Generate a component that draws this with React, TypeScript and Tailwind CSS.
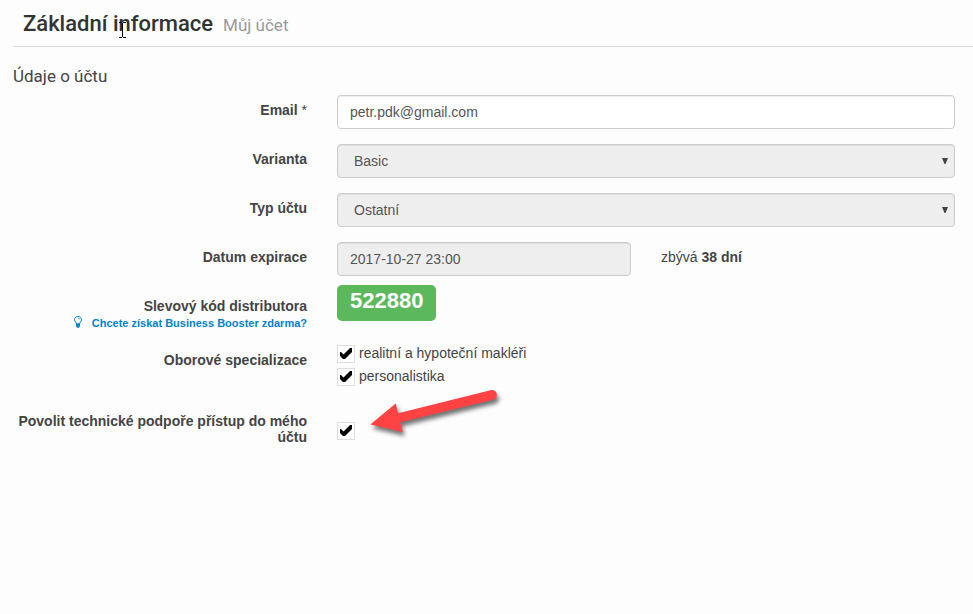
import type { ReactNode } from 'react';

const fieldBase =
  'block h-[34px] w-full rounded border border-[#ccc] text-[14px] text-[#555] shadow-[inset_0_1px_1px_rgba(0,0,0,0.075)] outline-none';

function Row({ htmlFor, label, hint, children }: { htmlFor?: string; label: ReactNode; hint?: ReactNode; children: ReactNode }) {
  return (
    <div className="grid grid-cols-12 gap-x-[30px]">
      <div className="col-span-4 pt-[7px] text-right text-[14px] leading-4 font-bold">
        <label htmlFor={htmlFor}>{label}</label>
        {hint}
      </div>
      {children}
    </div>
  );
}

function Tick({ id }: { id: string }) {
  return (
    <span className="grid size-[18px] shrink-0">
      <input
        id={id}
        type="checkbox"
        defaultChecked
        className="peer col-start-1 row-start-1 size-[18px] appearance-none border border-[#ddd] bg-white"
      />
      <svg viewBox="0 0 18 18" className="pointer-events-none invisible col-start-1 row-start-1 size-[18px] peer-checked:visible" aria-hidden="true">
        <path d="M3 7H4L6.5 9.500L13 3H15V7L8 14H6L3 11Z" fill="#000" />
      </svg>
    </span>
  );
}

function SelectField({ id, value }: { id: string; value: string }) {
  return (
    <div className="relative col-span-8">
      <select id={id} disabled className={`${fieldBase} appearance-none bg-[#eee] px-4 opacity-100`}>
        <option>{value}</option>
      </select>
      <svg viewBox="0 0 6 6" className="pointer-events-none absolute top-[14px] right-[7px] size-[6px]" aria-hidden="true">
        <path d="M0 0H6L3.5 6H2.5Z" fill="#444" />
      </svg>
    </div>
  );
}

export default function App() {
  return (
    <main className="min-h-screen bg-[#fdfdfd] pl-[13px] font-['Liberation_Sans',Arial,sans-serif] text-[#444]">
      <header className="relative flex h-[47px] items-baseline gap-[10px] border-b border-[#ddd] pt-2 pl-[10px] font-[Roboto,sans-serif]">
        <h1 className="text-[22px] leading-8 font-medium text-[#333]">Základní informace</h1>
        <small className="text-[17px] text-[#999]">Můj účet</small>
        <svg viewBox="0 0 7 16" className="absolute top-[22px] left-[106px] h-4 w-[7px]" fill="none" stroke="#000" aria-hidden="true">
          <path d="M0 .5H3M4 .5H7M3.5 1V15M0 15.5H3M4 15.5H7" />
        </svg>
      </header>

      <form className="flex flex-col gap-[15px] pr-[18px]">
        <h2 className="mt-[17px] -mb-2 font-[Roboto,sans-serif] text-[17px] leading-6 text-[#444]">Údaje o účtu</h2>

        <Row htmlFor="email" label={<>Email <span className="font-normal">*</span></>}>
          <div className="col-span-8">
            <input id="email" type="email" defaultValue="petr.pdk@gmail.com" className={`${fieldBase} bg-white px-3`} />
          </div>
        </Row>
        <Row htmlFor="variant" label="Varianta">
          <SelectField id="variant" value="Basic" />
        </Row>
        <Row htmlFor="type" label="Typ účtu">
          <SelectField id="type" value="Ostatní" />
        </Row>
        <Row htmlFor="expiry" label="Datum expirace">
          <div className="col-span-4">
            <input id="expiry" disabled defaultValue="2017-10-27 23:00" className={`${fieldBase} bg-[#eee] px-3`} />
          </div>
          <p className="col-span-4 pt-[7px] text-[14px] leading-4">
            zbývá <strong>38 dní</strong>
          </p>
        </Row>

        <Row
          label="Slevový kód distributora"
          hint={
            <a href="#booster" className="flex items-center justify-end gap-[9px] text-[11px] leading-[18px] font-bold text-[#0082cc]">
              <svg viewBox="0 0 10 14" className="-mt-[2px] h-[14px] w-[10px]" fill="none" stroke="#0082cc" aria-hidden="true">
                <path d="M3.500 9C3.500 7.500 1.500 6.600 1.500 4.700C1.500 2.800 3 1.500 5 1.500S8.500 2.800 8.500 4.700C8.500 6.600 6.500 7.500 6.500 9Z" />
                <path d="M5 3C6 3 6.800 3.600 6.800 4.500" strokeWidth=".7" />
                <path d="M3 8.500H7V11L6 12.700H4L3 11Z" fill="#0082cc" stroke="none" />
              </svg>
              Chcete získat Business Booster zdarma?
            </a>
          }
        >
          <div className="col-span-8 -mt-[6px] -mb-4">
            <strong className="inline-block h-9 rounded-[5px] bg-[#5cb85c] px-[13px] text-[22px] leading-8 text-white">522880</strong>
          </div>
        </Row>

        <div className="-mt-[2px]">
          <Row label="Oborové specializace">
            <div className="col-span-8 flex flex-col gap-[5px] text-[14px] leading-4">
              <label htmlFor="realty" className="flex gap-1">
                <Tick id="realty" />
                realitní a hypoteční makléři
              </label>
              <label htmlFor="hr" className="flex gap-1">
                <Tick id="hr" />
                personalistika
              </label>
            </div>
          </Row>
        </div>

        <div className="mt-[5px]">
          <Row htmlFor="support" label="Povolit technické podpoře přístup do mého účtu">
            <div className="relative col-span-8 pt-4">
              <Tick id="support" />
              <svg viewBox="0 0 150 65" className="pointer-events-none absolute -top-[26px] left-[23px] h-[65px] w-[150px] overflow-visible drop-shadow-[2px_4px_2px_rgba(0,0,0,0.55)]" aria-hidden="true">
                <path d="M10.300 44.500L35.700 23.500L38 33.300L131.500 10A5 5 0 0 1 134 19.500L40.300 42.300L42.700 52Z" fill="#ff4343" />
              </svg>
            </div>
          </Row>
        </div>
      </form>
    </main>
  );
}
